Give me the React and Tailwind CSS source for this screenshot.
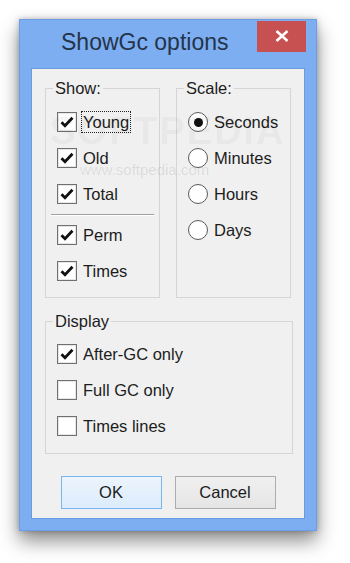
import { useState } from "react";

const FONT = { fontFamily: '"Liberation Sans", Arial, sans-serif' };

function CheckBox({ checked, label, focus, onToggle }) {
  return (
    <div className="flex h-9 items-center cursor-default" onClick={onToggle}>
      <span className="ml-[11px] flex h-[20px] w-[20px] items-center justify-center border border-[#707070] bg-white shadow-[inset_0_0_0_1px_#e6e6e6]">
        {checked && (
          <svg width="14" height="12" viewBox="0 0 14 12">
            <path d="M1.5 6.2 L5 9.8 L12.5 1.8" fill="none" stroke="#111" strokeWidth="2.8" strokeLinejoin="miter" />
          </svg>
        )}
      </span>
      <span
        className={
          "ml-[6px] text-[16.5px] leading-[20px] text-[#1c1c1c] " +
          (focus ? "outline-1 outline-dotted outline-[#222] outline-offset-0 px-[1px] -ml-[1px]" : "")
        }
        style={focus ? { marginLeft: 5 } : undefined}
      >
        {label}
      </span>
    </div>
  );
}

function Radio({ checked, label, onPick }) {
  return (
    <div className="flex h-9 items-center cursor-default" onClick={onPick}>
      <span className="ml-[11px] flex h-[20px] w-[20px] items-center justify-center rounded-full border border-[#5a5a5a] bg-white">
        {checked && <span className="h-[9px] w-[9px] rounded-full bg-[#111]" />}
      </span>
      <span className="ml-[6px] text-[16.5px] leading-[20px] text-[#1c1c1c]">{label}</span>
    </div>
  );
}

function Group({ title, className, children }) {
  return (
    <fieldset className={"border border-[#d5d5d5] " + className}>
      <legend className="ml-[7px] px-[2px] text-[16.5px] leading-[20px] text-[#1c1c1c]">{title}</legend>
      {children}
    </fieldset>
  );
}

export default function App() {
  const [show, setShow] = useState({ Young: true, Old: true, Total: true, Perm: true, Times: true });
  const [scale, setScale] = useState("Seconds");
  const [display, setDisplay] = useState({ after: true, full: false, lines: false });

  const toggle = (k) => setShow({ ...show, [k]: !show[k] });

  return (
    <div className="h-[563px] w-[350px] overflow-hidden bg-white pl-[19px] pt-[19px]" style={FONT}>
      <div className="relative flex w-[298px] flex-col bg-[#7eaef2] px-[11px] pb-[11px] shadow-[0_10px_18px_rgba(0,0,0,0.45),0_0_6px_rgba(0,0,0,0.25)] border border-[#6d9de6]">
        {/* title bar */}
        <div className="flex h-[48px] items-center justify-between">
          <span className="pl-[30px] pb-[3px] text-[23px] text-[#24344a]">ShowGc options</span>
          <button className="-mr-[1px] mb-[16px] flex h-[31px] w-[49px] items-center justify-center bg-[#c75050]">
            <svg width="14" height="12" viewBox="0 0 14 12">
              <path d="M1.5 1 L12.5 11 M12.5 1 L1.5 11" stroke="#fff" strokeWidth="2.6" />
            </svg>
          </button>
        </div>

        {/* client area */}
        <div className="relative flex h-[451px] flex-col border border-[#6a9ae0] bg-[#f0f0f0] px-[13px] pt-[9px]">
          <div className="flex gap-[16px]">
            <Group title="Show:" className="h-[220px] w-[116px]">
              <div className="pt-[6px]">
                {["Young", "Old", "Total"].map((k) => (
                  <CheckBox key={k} label={k} checked={show[k]} focus={k === "Young"} onToggle={() => toggle(k)} />
                ))}
                <div className="mx-[5px] mt-[2px] mb-[1px] h-[2px] border-t border-[#a0a0a0] border-b border-b-white" />
                {["Perm", "Times"].map((k) => (
                  <CheckBox key={k} label={k} checked={show[k]} onToggle={() => toggle(k)} />
                ))}
              </div>
            </Group>
            <Group title="Scale:" className="h-[220px] w-[116px]">
              <div className="pt-[6px]">
                {["Seconds", "Minutes", "Hours", "Days"].map((k) => (
                  <Radio key={k} label={k} checked={scale === k} onPick={() => setScale(k)} />
                ))}
              </div>
            </Group>
          </div>

          <Group title="Display" className="mt-[13px] h-[143px] w-[248px]">
            <div className="pt-[5px]">
              <CheckBox label="After-GC only" checked={display.after} onToggle={() => setDisplay({ ...display, after: !display.after })} />
              <CheckBox label="Full GC only" checked={display.full} onToggle={() => setDisplay({ ...display, full: !display.full })} />
              <CheckBox label="Times lines" checked={display.lines} onToggle={() => setDisplay({ ...display, lines: !display.lines })} />
            </div>
          </Group>

          <div className="mt-[22px] flex justify-center gap-[13px]">
            <button className="h-[33px] w-[101px] border border-[#7ab6ee] bg-gradient-to-b from-[#ecf4fc] to-[#dcecfc] text-[16.5px] text-[#1c1c1c]">
              OK
            </button>
            <button className="h-[33px] w-[101px] border border-[#acacac] bg-gradient-to-b from-[#f0f0f0] to-[#e5e5e5] text-[16.5px] text-[#1c1c1c]">
              Cancel
            </button>
          </div>

          {/* watermark */}
          <div className="pointer-events-none absolute left-[18px] top-[34px] text-[38px] font-bold tracking-[2px] text-black/5">
            SOFTPEDIA
          </div>
          <div className="pointer-events-none absolute left-[48px] top-[90px] text-[15px] text-black/10">
            www.softpedia.com
          </div>
        </div>
      </div>
    </div>
  );
}
